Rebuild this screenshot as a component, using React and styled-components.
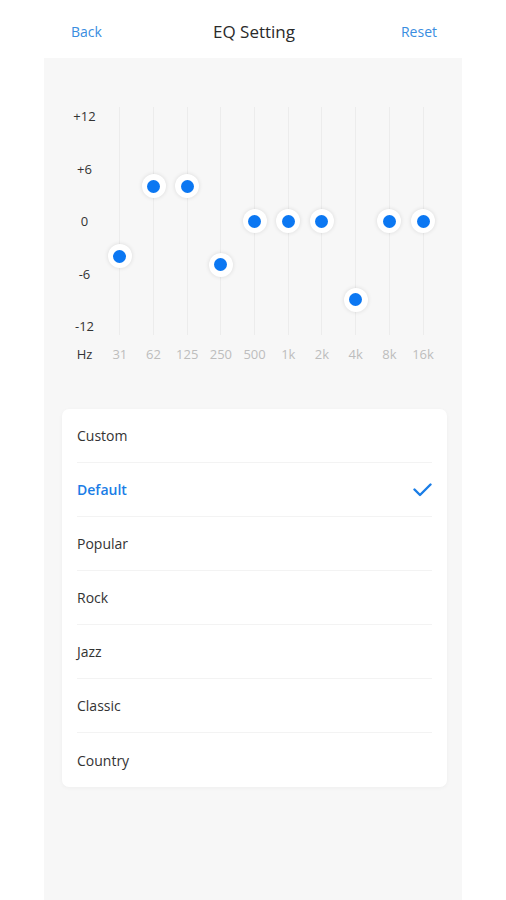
import React from 'react'
import styled, { createGlobalStyle } from 'styled-components'

const bands = [
  { hz: '31', value: -4 },
  { hz: '62', value: 4 },
  { hz: '125', value: 4 },
  { hz: '250', value: -5 },
  { hz: '500', value: 0 },
  { hz: '1k', value: 0 },
  { hz: '2k', value: 0 },
  { hz: '4k', value: -9 },
  { hz: '8k', value: 0 },
  { hz: '16k', value: 0 },
]

const presets = ['Custom', 'Default', 'Popular', 'Rock', 'Jazz', 'Classic', 'Country']
const levels = ['+12', '+6', '0', '-6', '-12']

const TRACK_PAD = 9
const RANGE = 210

function CheckIcon() {
  return (
    <svg width="19" height="14" viewBox="0 0 19 14" fill="none">
      <path d="M1.5 6.5 L7 12 L17.5 1.5" stroke="#1a7de6" strokeWidth="2.4" strokeLinecap="round" strokeLinejoin="round" />
    </svg>
  )
}

function App() {
  return (
    <>
      <Global />
      <Header>
        <NavLink>Back</NavLink>
        <Title>EQ Setting</Title>
        <NavLink>Reset</NavLink>
      </Header>
      <Panel>
        <Chart>
          <Axis>
            <Levels>
              {levels.map(l => <Level key={l}>{l}</Level>)}
            </Levels>
            <AxisUnit>Hz</AxisUnit>
          </Axis>
          {bands.map(b => (
            <Band key={b.hz}>
              <Track>
                <Knob style={{ top: TRACK_PAD + ((12 - b.value) / 24) * RANGE }} />
              </Track>
              <Freq>{b.hz}</Freq>
            </Band>
          ))}
        </Chart>
        <Card>
          {presets.map(p => (
            <Row key={p} $active={p === 'Default'}>
              <span>{p}</span>
              {p === 'Default' && <CheckIcon />}
            </Row>
          ))}
        </Card>
      </Panel>
    </>
  )
}

export default App

const Global = createGlobalStyle`
    body {
        margin: 0;
        background: #fff;
        font-family: "Open Sans", "Noto Sans", sans-serif;
    }
`;

const Header = styled.div`
    height: 58px;
    display: flex;
    align-items: center;
    justify-content: space-between;
    padding: 4px 69px 0 71px;
    box-sizing: border-box;
`;

const NavLink = styled.span`
    font-size: 14px;
    color: #3a8ddf;
    width: 40px;
    &:last-child{
        text-align: right;
    }
`;

const Title = styled.span`
    font-size: 17px;
    color: #2a2a2a;
`;

const Panel = styled.div`
    margin: 0 44px;
    background: #f7f7f7;
    min-height: 842px;
    padding-top: 49px;
    box-sizing: border-box;
    overflow: hidden;
`;

const Chart = styled.div`
    display: flex;
    padding-left: 22px;
`;

const Axis = styled.div`
    width: 37px;
    display: flex;
    flex-direction: column;
    align-items: center;
`;

const Levels = styled.div`
    height: 228px;
    display: flex;
    flex-direction: column;
    justify-content: space-between;
    align-items: center;
`;

const Level = styled.span`
    font-size: 13px;
    color: #333;
    line-height: 18px;
`;

const AxisUnit = styled.span`
    font-size: 13px;
    color: #333;
    margin-top: 10px;
    line-height: 18px;
`;

const Band = styled.div`
    width: 33.7px;
    display: flex;
    flex-direction: column;
    align-items: center;
`;

const Track = styled.div`
    position: relative;
    width: 1px;
    height: 228px;
    background: #ececec;
`;

const Knob = styled.div`
    position: absolute;
    left: 50%;
    width: 24px;
    height: 24px;
    margin: -12px 0 0 -12px;
    border-radius: 50%;
    background: #fff;
    box-shadow: 0 0 4px rgba(0, 0, 0, 0.12);
    display: flex;
    align-items: center;
    justify-content: center;
    &:after{
        content: "";
        width: 13px;
        height: 13px;
        border-radius: 50%;
        background: #0b77f2;
    }
`;

const Freq = styled.span`
    font-size: 13px;
    color: #bdbdbd;
    margin-top: 10px;
    line-height: 18px;
`;

const Card = styled.div`
    margin: 46px 15px 0 18px;
    background: #fff;
    border-radius: 7px;
    box-shadow: 0 1px 4px rgba(0, 0, 0, 0.04);
    padding: 0 15px;
`;

const Row = styled.div`
    height: 54px;
    display: flex;
    align-items: center;
    justify-content: space-between;
    font-size: 14px;
    color: ${p => (p.$active ? '#1a7de6' : '#333')};
    font-weight: ${p => (p.$active ? 600 : 400)};
    border-bottom: 1px solid #f3f3f3;
    box-sizing: border-box;
    &:last-child{
        border-bottom: none;
    }
`;
